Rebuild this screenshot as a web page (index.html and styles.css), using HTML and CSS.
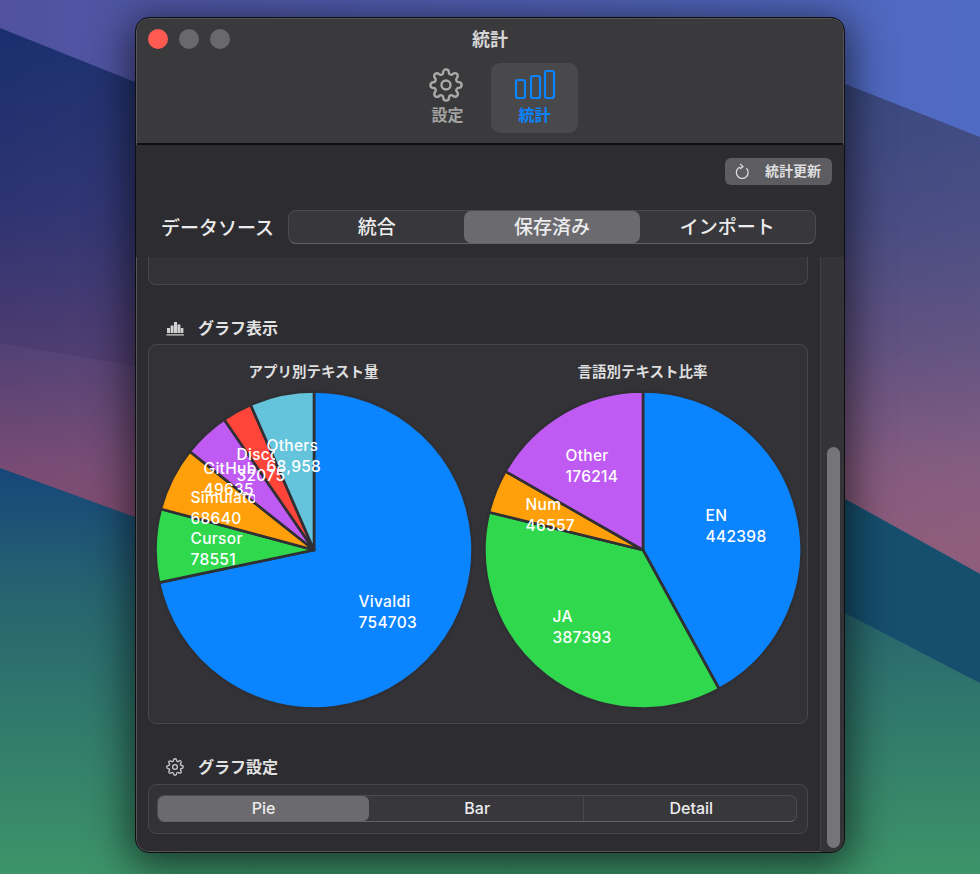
FILE: index.html
```html
<!DOCTYPE html>
<html lang="ja">
<head>
    <meta charset="UTF-8">
    <title>統計</title>
    <link rel="stylesheet" href="styles.css">
</head>
<body>
    <!-- 壁紙 -->
    <svg class="wallpaper" viewBox="0 0 980 874" preserveAspectRatio="none">
        <defs>
            <linearGradient id="wall-top" x1="0" y1="0" x2="1" y2="0">
                <stop offset="0" stop-color="#50529f"/>
                <stop offset="1" stop-color="#506bc4"/>
            </linearGradient>
            <linearGradient id="wall-mid" gradientUnits="userSpaceOnUse" x1="0" y1="40" x2="0" y2="540">
                <stop offset="0" stop-color="#1b2f6e"/>
                <stop offset="0.35" stop-color="#2f3472"/>
                <stop offset="0.62" stop-color="#4d3b70"/>
                <stop offset="0.86" stop-color="#74456f"/>
                <stop offset="1" stop-color="#7e4669"/>
            </linearGradient>
            <linearGradient id="wall-light" x1="0" y1="0" x2="1" y2="0">
                <stop offset="0" stop-color="#fff" stop-opacity="0"/>
                <stop offset="1" stop-color="#fff" stop-opacity="0.13"/>
            </linearGradient>
            <linearGradient id="wall-low" gradientUnits="userSpaceOnUse" x1="0" y1="470" x2="0" y2="874">
                <stop offset="0" stop-color="#17477a"/>
                <stop offset="0.32" stop-color="#27656f"/>
                <stop offset="0.7" stop-color="#347f6b"/>
                <stop offset="1" stop-color="#3d9469"/>
            </linearGradient>
        </defs>
        <rect width="980" height="874" fill="url(#wall-top)"/>
        <path d="M0 28 L135 82 L845 84 L980 137 V620 H0 Z" fill="url(#wall-mid)"/>
        <path d="M0 28 L135 82 L845 84 L980 137 V620 H0 Z" fill="url(#wall-light)"/>
        <path d="M0 343 L135 366 V517 L0 468 Z" fill="#fff" fill-opacity="0.035"/>
        <path d="M0 468 L135 517 L845 499 L980 574 V874 H0 Z" fill="url(#wall-low)"/>
        <path d="M845 499 L980 574 V683 L845 613 Z" fill="#164f6e"/>
    </svg>

    <svg class="icon-defs">
        <symbol id="gear" viewBox="0 0 24 24">
            <circle cx="12" cy="12" r="3.2"/>
            <path d="M19.4 15a1.65 1.65 0 0 0 .33 1.82l.06.06a2 2 0 0 1 0 2.83 2 2 0 0 1-2.83 0l-.06-.06a1.65 1.65 0 0 0-1.82-.33 1.65 1.65 0 0 0-1 1.51V21a2 2 0 0 1-2 2 2 2 0 0 1-2-2v-.09A1.65 1.65 0 0 0 9 19.4a1.65 1.65 0 0 0-1.82.33l-.06.06a2 2 0 0 1-2.83 0 2 2 0 0 1 0-2.83l.06-.06a1.65 1.65 0 0 0 .33-1.82 1.65 1.65 0 0 0-1.51-1H3a2 2 0 0 1-2-2 2 2 0 0 1 2-2h.09A1.65 1.65 0 0 0 4.6 9a1.65 1.65 0 0 0-.33-1.82l-.06-.06a2 2 0 0 1 0-2.83 2 2 0 0 1 2.83 0l.06.06a1.65 1.65 0 0 0 1.82.33H9a1.65 1.65 0 0 0 1-1.51V3a2 2 0 0 1 2-2 2 2 0 0 1 2 2v.09a1.65 1.65 0 0 0 1 1.51 1.65 1.65 0 0 0 1.82-.33l.06-.06a2 2 0 0 1 2.83 0 2 2 0 0 1 0 2.83l-.06.06a1.65 1.65 0 0 0-.33 1.82V9a1.65 1.65 0 0 0 1.51 1H21a2 2 0 0 1 2 2 2 2 0 0 1-2 2h-.09a1.65 1.65 0 0 0-1.51 1z"/>
        </symbol>
    </svg>

    <div class="window">
        <header class="titlebar">
            <div class="title-row">
                <div class="lights">
                    <span class="light light-red"></span>
                    <span class="light"></span>
                    <span class="light"></span>
                </div>
                <div class="title">統計</div>
            </div>
            <nav class="tabs">
                <div class="tab">
                    <svg class="tab-icon gear-icon"><use href="#gear"/></svg>
                    <span>設定</span>
                </div>
                <div class="tab tab-active">
                    <svg class="tab-icon" viewBox="0 0 44 34">
                        <rect x="3" y="12" width="9" height="18" rx="2"/>
                        <rect x="18" y="8" width="9" height="22" rx="2"/>
                        <rect x="32" y="3" width="9" height="27" rx="2"/>
                    </svg>
                    <span>統計</span>
                </div>
            </nav>
        </header>

        <div class="top-panel">
            <div class="refresh-row">
                <button class="refresh">
                    <svg class="refresh-icon" viewBox="0 0 16 18">
                        <path d="M12.2 5.6 A6.3 6.3 0 1 1 5.4 4.2"/>
                        <path d="M5.6 1 L8.4 3.8 L5.2 6.2"/>
                    </svg>
                    <span>統計更新</span>
                </button>
            </div>
            <div class="source-row">
                <span class="source-label">データソース</span>
                <div class="segment segment-large">
                    <span>統合</span>
                    <span class="segment-on">保存済み</span>
                    <span>インポート</span>
                </div>
            </div>
        </div>

        <div class="scroll-area">
            <main class="main">
                <div class="card card-stub"></div>

                <h3 class="section-title section-title-chart">
                    <svg class="section-icon" viewBox="0 0 20 16">
                        <path class="bars-fill" d="M2 13V8h3v5zM5.6 13V5.5h3V13zM9 13V2h3v11zM12.4 13V4.5h3V13zM15.8 13V8h2.6v5zM1.5 14.2h17.4v1.3H1.5z"/>
                    </svg>
                    グラフ表示
                </h3>
                <section class="card charts">
                    <div class="chart">
                        <div class="chart-title">アプリ別テキスト量</div>
                        <div class="pie">
                            <svg class="pie-svg" viewBox="-158.5 -158.5 317 317">
                                <path fill="#0a84ff" d="M0 0 V-157 A157 157 0 1 1 -153.6 32.3 Z"/>
                                <path fill="#30d84e" d="M0 0 L-153.6 32.3 A157 157 0 0 1 -151.7 -40.6 Z"/>
                                <path fill="#ff9f0a" d="M0 0 L-151.7 -40.6 A157 157 0 0 1 -123 -97.6 Z"/>
                                <path fill="#bf5af2" d="M0 0 L-123 -97.6 A157 157 0 0 1 -89 -129.3 Z"/>
                                <path fill="#ff453a" d="M0 0 L-89 -129.3 A157 157 0 0 1 -62.8 -143.9 Z"/>
                                <path fill="#64c4dc" d="M0 0 L-62.8 -143.9 A157 157 0 0 1 0 -157 Z"/>
                            </svg>
                            <div class="pie-label vivaldi">Vivaldi<br>754703</div>
                            <div class="pie-label cursor">Cursor<br>78551</div>
                            <div class="pie-label simulator"><span class="clip clip-simulator">Simulator</span><br>68640</div>
                            <div class="pie-label github">GitHub<br>49635</div>
                            <div class="pie-label discord"><span class="clip clip-discord">Discord</span><br>32075</div>
                            <div class="pie-label others">Others<br>68,958</div>
                        </div>
                    </div>
                    <div class="chart">
                        <div class="chart-title">言語別テキスト比率</div>
                        <div class="pie">
                            <svg class="pie-svg" viewBox="-158.5 -158.5 317 317">
                                <path fill="#0a84ff" d="M0 0 V-157 A157 157 0 0 1 75.4 137.7 Z"/>
                                <path fill="#30d84e" d="M0 0 L75.4 137.7 A157 157 0 0 1 -152.5 -37.4 Z"/>
                                <path fill="#ff9f0a" d="M0 0 L-152.5 -37.4 A157 157 0 0 1 -136.3 -77.9 Z"/>
                                <path fill="#bf5af2" d="M0 0 L-136.3 -77.9 A157 157 0 0 1 0 -157 Z"/>
                            </svg>
                            <div class="pie-label lang-en">EN<br>442398</div>
                            <div class="pie-label lang-ja">JA<br>387393</div>
                            <div class="pie-label lang-num">Num<br>46557</div>
                            <div class="pie-label lang-other">Other<br>176214</div>
                        </div>
                    </div>
                </section>

                <h3 class="section-title section-title-setting">
                    <svg class="section-icon gear-icon"><use href="#gear"/></svg>
                    グラフ設定
                </h3>
                <section class="card setting-card">
                    <div class="segment segment-small">
                        <span class="segment-on">Pie</span>
                        <span class="segment-shift">Bar</span>
                        <span class="segment-line segment-shift">Detail</span>
                    </div>
                </section>
            </main>
            <aside class="scrollbar">
                <div class="thumb"></div>
            </aside>
        </div>
    </div>
</body>
</html>
```

FILE: styles.css
```css
* {
    margin: 0;
    padding: 0;
    box-sizing: border-box;
}
html, body {
    height: 874px;
    overflow: hidden;
}
body {
    padding-top: 17px;
    font-family: "Inter", "Noto Sans CJK JP", sans-serif;
    color: #e6e6e6;
    background: #1c2f6c;
}
.wallpaper {
    position: absolute;
    left: 0;
    top: 0;
    width: 980px;
    height: 874px;
}
.icon-defs {
    position: absolute;
    width: 0;
    height: 0;
}

/* ウィンドウ */
.window {
    position: relative;
    display: flex;
    flex-direction: column;
    width: 710px;
    height: 836px;
    margin-left: 135px;
    overflow: hidden;
    border: 1px solid #0e0e10;
    border-radius: 14px;
    background: #2c2c31;
    box-shadow: 0 8px 40px 6px rgba(0, 0, 0, 0.58), inset 0 0 0 1px #55555a;
}

/* タイトルバー */
.titlebar {
    flex: none;
    height: 126px;
    margin: 1px 1px 0;
    border-bottom: 2px solid #0f0f11;
    border-radius: 13px 13px 0 0;
    background: #3a3a3c;
}
.title-row {
    position: relative;
    display: flex;
    justify-content: center;
    align-items: center;
    height: 42px;
    padding-bottom: 4px;
}
.lights {
    position: absolute;
    left: 11px;
    top: 10px;
    display: flex;
    gap: 11px;
}
.light {
    width: 20px;
    height: 20px;
    border-radius: 50%;
    background: #69696b;
}
.light-red {
    background: #ff5a52;
}
.title {
    font-size: 18px;
    font-weight: 700;
    color: #d6d6d6;
}
.tabs {
    display: flex;
    justify-content: center;
    margin: 2px 0 0 2px;
}
.tab {
    display: flex;
    flex-direction: column;
    align-items: center;
    width: 87px;
    height: 70px;
    padding-top: 5px;
    border-radius: 9px;
    font-size: 16px;
    font-weight: 700;
    line-height: 20px;
    color: #a3a3a3;
}
.tab-active {
    background: #49494b;
    color: #0a84ff;
}
.tab-icon {
    width: 44px;
    height: 34px;
    margin-bottom: 3px;
    fill: none;
    stroke: #a9a9a9;
    stroke-width: 1.7;
}
.tab-active .tab-icon {
    stroke: #0a84ff;
    stroke-width: 2.2;
}
.tab .gear-icon {
    margin-left: -3px;
}
.gear-icon {
    fill: none;
    stroke-linejoin: round;
}

/* 上部パネル */
.top-panel {
    flex: none;
    height: 112px;
    padding: 13px 12px 0 25px;
    background: #2c2c31;
}
.refresh-row {
    display: flex;
    justify-content: flex-end;
}
.refresh {
    display: flex;
    align-items: center;
    gap: 15px;
    width: 107px;
    height: 27px;
    padding: 0 0 3px 10px;
    border: none;
    border-radius: 6px;
    background: #5c5c61;
    font-family: inherit;
    font-size: 14px;
    font-weight: 700;
    color: #dedede;
}
.refresh-icon {
    flex: none;
    width: 15px;
    height: 17px;
    fill: none;
    stroke: #dcdcdc;
    stroke-width: 1.4;
    margin-top: 3px;
}
.source-row {
    display: flex;
    align-items: center;
    gap: 13px;
    margin: 25px 16px 0 0;
}
.source-label {
    flex: none;
    width: 114px;
    padding-bottom: 2px;
    font-size: 19px;
    font-weight: 500;
    color: #ececec;
    white-space: nowrap;
}

/* セグメント */
.segment {
    flex: 1;
    display: grid;
    grid-template-columns: repeat(3, 1fr);
    border: 1px solid #4a4a4f;
    border-bottom-color: #626267;
    background: #37373c;
    font-weight: 500;
    color: #ececec;
}
.segment span {
    display: flex;
    justify-content: center;
    align-items: center;
}
.segment-on {
    background: #6a6a6f;
}
.segment-large {
    height: 34px;
    border-radius: 8px;
    font-size: 19px;
}
.segment-large span {
    padding-bottom: 3px;
}
.segment-large .segment-on {
    border-radius: 7px;
}
.segment-small {
    grid-template-columns: 211px 1fr 1fr;
    height: 27px;
    border-radius: 7px;
    font-size: 16px;
}
.segment-small span {
    padding-bottom: 1px;
}
.segment-small .segment-on {
    border-radius: 6px;
}
.segment-small .segment-shift {
    padding-left: 3px;
}
.segment-line {
    border-left: 1px solid #47474c;
}

/* スクロール領域 */
.scroll-area {
    flex: 1;
    display: flex;
    min-height: 0;
}
.main {
    flex: 1;
    min-width: 0;
    padding: 0 12px;
}
.card {
    border: 1px solid #47474c;
    border-radius: 8px;
    background: #323237;
}
.card-stub {
    height: 28px;
    border-top: none;
    border-radius: 0 0 8px 8px;
}
.section-title {
    display: flex;
    align-items: center;
    height: 22px;
    padding: 0 0 3px 17px;
    font-size: 16px;
    font-weight: 700;
    color: #e2e2e2;
}
.section-title-chart {
    margin: 32px 0 5px;
}
.section-title-setting {
    margin: 32px 0 6px;
}
.section-icon {
    flex: none;
    width: 20px;
    height: 18px;
    margin-right: 13px;
}
.bars-fill {
    fill: #d2d2d2;
}
.section-title-chart .section-icon {
    height: 16px;
    margin-top: 3px;
}
.section-title-setting .section-icon {
    stroke: #cfcfcf;
    stroke-width: 1.7;
    margin-top: 2px;
}

/* グラフ */
.charts {
    display: grid;
    grid-template-columns: 1fr 1fr;
    height: 380px;
}
.chart {
    display: flex;
    flex-direction: column;
    align-items: center;
    padding-top: 19px;
}
.chart-title {
    height: 16px;
    margin-bottom: 10px;
    font-size: 14.5px;
    font-weight: 700;
    line-height: 16px;
    color: #dedede;
}
.pie {
    position: relative;
    width: 320px;
    height: 320px;
}
.pie-svg {
    display: block;
    width: 320px;
    height: 320px;
}
.pie-svg path {
    stroke: #2f2f34;
    stroke-width: 2.6;
    stroke-linejoin: round;
}
.pie-label {
    position: absolute;
    font-size: 15.5px;
    font-weight: 500;
    line-height: 20.5px;
    letter-spacing: 0.3px;
    white-space: nowrap;
    color: #fff;
}
.clip {
    display: inline-block;
    overflow: hidden;
    vertical-align: top;
}
.clip-simulator { width: 64px; }
.clip-discord { width: 38px; }
.vivaldi { left: 205px; top: 202px; }
.cursor { left: 37px; top: 139px; }
.simulator { left: 37px; top: 98px; }
.github { left: 50px; top: 69px; }
.discord { left: 83px; top: 55px; }
.others { left: 113px; top: 46px; }
.lang-en { left: 223px; top: 116px; }
.lang-ja { left: 70px; top: 217px; }
.lang-num { left: 43px; top: 105px; }
.lang-other { left: 83px; top: 56px; }

.setting-card {
    height: 50px;
    padding: 10px 10px 0 8px;
}

/* スクロールバー */
.scrollbar {
    flex: none;
    width: 24px;
    padding: 190px 4px 4px 6px;
    border-left: 1px solid #404044;
    background: #343438;
}
.thumb {
    height: 401px;
    border-radius: 7px;
    background: #757579;
}
```
